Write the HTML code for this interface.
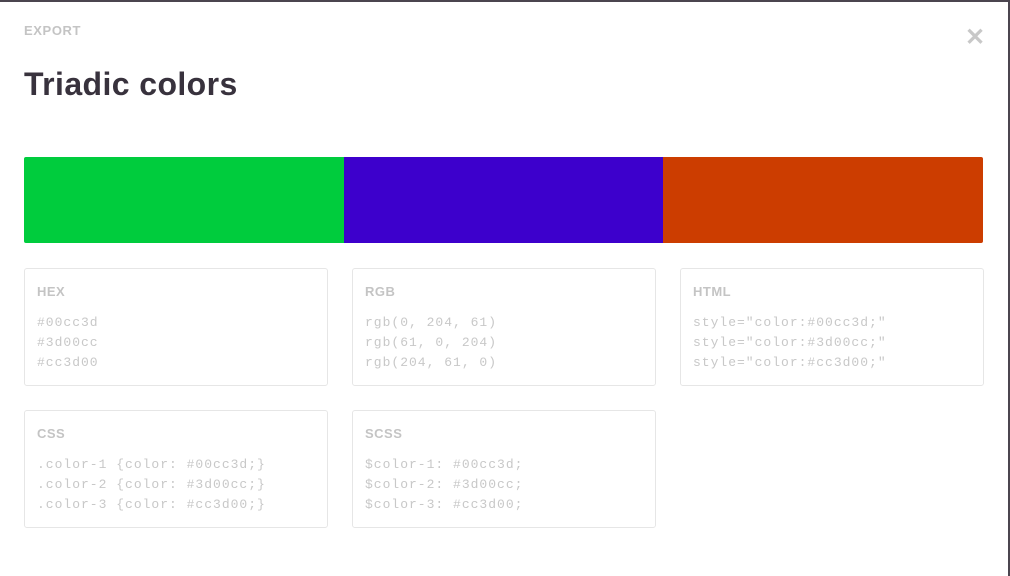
<!DOCTYPE html>
<html><head><style>
body{margin:0;width:1010px;height:576px;background:#fff;position:relative;overflow:hidden;font-family:"Liberation Sans",sans-serif}
.top{position:absolute;left:0;top:0;width:1010px;height:2px;background:#4b454f}
.right{position:absolute;right:0;top:0;width:2px;height:576px;background:#4b454f}
.exp{position:absolute;left:24px;top:23px;font-size:13px;font-weight:bold;color:#c4c4c4;letter-spacing:0.6px}
h1{position:absolute;left:24px;top:66px;margin:0;font-size:32px;font-weight:bold;color:#38323d;letter-spacing:0.4px}
.x{position:absolute;left:965px;top:23px;font-size:24px;color:#c8c8c8;font-weight:bold}
.bar{position:absolute;top:157px;height:86px;left:24px;width:959px;display:flex;border-radius:2px;overflow:hidden}
.bar div{flex:1}
.box{position:absolute;width:302px;height:116px;border:1px solid #e6e6e6;border-radius:3px}
.box b{position:absolute;left:12px;top:15px;font-size:13px;color:#c4c4c4;letter-spacing:0.5px}
.box pre{position:absolute;left:12px;top:44px;margin:0;font-family:"Liberation Mono",monospace;font-size:13px;line-height:20px;color:#c8c8c8;letter-spacing:1px}
</style></head><body>
<div class="top"></div><div class="right"></div>
<div class="exp">EXPORT</div>
<h1>Triadic colors</h1>
<div class="x">✕</div>
<div class="bar"><div style="background:#00cc3d"></div><div style="background:#3d00cc"></div><div style="background:#cc3d00"></div></div>
<div class="box" style="left:24px;top:268px"><b>HEX</b><pre>#00cc3d
#3d00cc
#cc3d00</pre></div>
<div class="box" style="left:352px;top:268px"><b>RGB</b><pre>rgb(0, 204, 61)
rgb(61, 0, 204)
rgb(204, 61, 0)</pre></div>
<div class="box" style="left:680px;top:268px"><b>HTML</b><pre>style="color:#00cc3d;"
style="color:#3d00cc;"
style="color:#cc3d00;"</pre></div>
<div class="box" style="left:24px;top:410px"><b>CSS</b><pre>.color-1 {color: #00cc3d;}
.color-2 {color: #3d00cc;}
.color-3 {color: #cc3d00;}</pre></div>
<div class="box" style="left:352px;top:410px"><b>SCSS</b><pre>$color-1: #00cc3d;
$color-2: #3d00cc;
$color-3: #cc3d00;</pre></div>
</body></html>
